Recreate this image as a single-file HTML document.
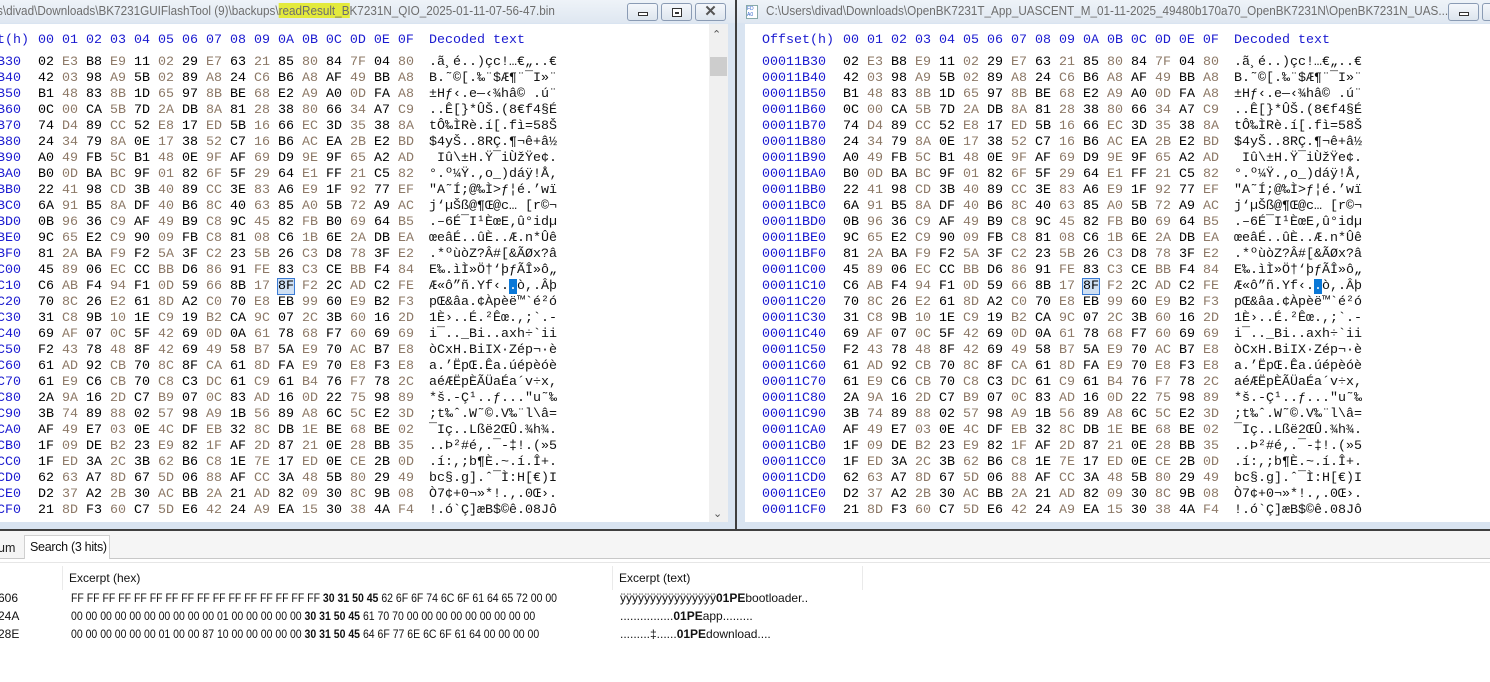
<!DOCTYPE html>
<html><head><meta charset="utf-8">
<style>
*{margin:0;padding:0;box-sizing:border-box}
body{width:1490px;height:682px;overflow:hidden;background:#fff;position:relative;font-family:"Liberation Sans",sans-serif}
.abs{position:absolute}
.frame{position:absolute;top:0;height:530px;background:#d9e4f1;overflow:hidden}
.title{position:absolute;left:0;right:0;top:0;height:23px;background:linear-gradient(#eef3f8,#dfe7f1);color:#6d6d6d;font-size:13px;line-height:22px;white-space:nowrap;overflow:hidden}
.title span.t{transform:scaleX(.9);transform-origin:left center}
.content{position:absolute;top:24px;background:#fff;overflow:hidden}
.mono{font-family:"Liberation Mono",monospace;font-size:13.33px;white-space:pre;line-height:16px}
.btn{position:absolute;top:3px;width:31px;height:18px;border:1px solid #8a9bb4;border-radius:3px;background:linear-gradient(#f4f7fb,#dde5ee)}
.blue{color:#1a1ad0}
.g{color:#8c7866}
.hl{background:#0a78d7;color:#fff}
.bx{outline:1px solid #3a7bd5;background:#cfe0f4}
.tbl{font-size:12px;color:#111;white-space:nowrap;transform-origin:left center}
</style></head><body>

<!-- left panel -->
<div class="frame" style="left:0;width:736px">
  <div class="title"><span class="t" style="position:absolute;left:-3px">s\divad\Downloads\BK7231GUIFlashTool (9)\backups\<span style="background:#e3ea3c">readResult_B</span>K7231N_QIO_2025-01-11-07-56-47.bin</span></div>
  <div class="btn" style="left:627px"><div class="abs" style="left:10px;top:8px;width:10px;height:4px;border:1px solid #333;background:#fff"></div></div>
  <div class="btn" style="left:661px"><div class="abs" style="left:10px;top:4px;width:10px;height:9px;border:1px solid #333;background:#fff"><div class="abs" style="left:2px;top:3px;width:4px;height:2px;background:#333"></div></div></div>
  <div class="btn" style="left:695px;font-size:15px;line-height:15px;text-align:center;color:#555;font-weight:bold">✕</div>
  <div class="content" id="lc" style="left:0;width:728px;height:498px"></div>
  <div class="abs" style="left:709px;top:24px;width:19px;height:498px;background:#f0f0f0"></div>
  <div class="abs" style="left:712px;top:28px;font-size:11px;color:#555">&#8963;</div>
  <div class="abs" style="left:710px;top:57px;width:17px;height:19px;background:#cdcdcd"></div>
  <div class="abs" style="left:713px;top:507px;font-size:11px;color:#555">&#8964;</div>
</div>
<div class="abs" style="left:735px;top:0;width:2px;height:531px;background:#3f3f3f"></div>

<!-- right panel -->
<div class="frame" style="left:737px;width:753px">
  <div class="title"><span style="position:absolute;left:9px;top:5px;width:12px;height:14px;border:1px solid #8aa;background:#fff;font-size:5px;line-height:6px;color:#36c">FD<br>A0</span><span class="t" style="position:absolute;left:29px">C:\Users\divad\Downloads\OpenBK7231T_App_UASCENT_M_01-11-2025_49480b170a70_OpenBK7231N\OpenBK7231N_UAS...</span></div>
  <div class="btn" style="left:711px"><div class="abs" style="left:10px;top:8px;width:10px;height:4px;border:1px solid #333;background:#fff"></div></div>
  <div class="btn" style="left:745px"></div>
  <div class="content" id="rc" style="left:8px;width:745px;height:498px"></div>
</div>
<div class="abs" style="left:0;top:529px;width:1490px;height:2px;background:#3f3f3f"></div>

<!-- bottom -->
<div class="abs" style="left:0;top:531px;width:1490px;height:28px;background:#f5f5f5;border-bottom:1px solid #c8c8c8"></div>
<div class="abs" style="left:-2px;top:541px;font-size:12.5px;color:#222">um</div>
<div class="abs" style="left:24px;top:535px;width:86px;height:24px;background:#fff;border:1px solid #d0d0d0;border-bottom:none;font-size:12.5px;line-height:22px;padding-left:5px;color:#111;white-space:nowrap;letter-spacing:-0.3px">Search (3 hits)</div>
<div class="abs" style="left:0;top:562px;width:1490px;height:1px;background:#e6e6e6"></div>
<div class="abs" style="left:62px;top:566px;width:1px;height:24px;background:#eaeaea"></div>
<div class="abs" style="left:612px;top:566px;width:1px;height:24px;background:#eaeaea"></div>
<div class="abs" style="left:862px;top:566px;width:1px;height:24px;background:#eaeaea"></div>
<div class="abs tbl" style="left:-3px;top:571px">:</div>
<div class="abs tbl" style="left:69px;top:571px">Excerpt (hex)</div>
<div class="abs tbl" style="left:619px;top:571px">Excerpt (text)</div>

<div class="abs tbl" style="left:-2px;top:591px">606</div>
<div class="abs tbl" style="left:-2px;top:609px">24A</div>
<div class="abs tbl" style="left:-2px;top:627px">28E</div>

<div class="abs tbl" style="left:71px;top:591px;transform:scaleX(.875)">FF FF FF FF FF FF FF FF FF FF FF FF FF FF FF FF <b>30 31 50 45</b> 62 6F 6F 74 6C 6F 61 64 65 72 00 00</div>
<div class="abs tbl" style="left:71px;top:609px;transform:scaleX(.875)">00 00 00 00 00 00 00 00 00 00 01 00 00 00 00 00 <b>30 31 50 45</b> 61 70 70 00 00 00 00 00 00 00 00 00</div>
<div class="abs tbl" style="left:71px;top:627px;transform:scaleX(.875)">00 00 00 00 00 00 01 00 00 87 10 00 00 00 00 00 <b>30 31 50 45</b> 64 6F 77 6E 6C 6F 61 64 00 00 00 00</div>
<div class="abs tbl" style="left:620px;top:591px;transform:scaleX(1)">ÿÿÿÿÿÿÿÿÿÿÿÿÿÿÿÿ<b>01PE</b>bootloader..</div>
<div class="abs tbl" style="left:620px;top:609px;transform:scaleX(1)">................<b>01PE</b>app.........</div>
<div class="abs tbl" style="left:620px;top:627px;transform:scaleX(1)">.........‡......<b>01PE</b>download....</div>

<script>
var rows=[
"02 E3 B8 E9 11 02 29 E7 63 21 85 80 84 7F 04 80",
"42 03 98 A9 5B 02 89 A8 24 C6 B6 A8 AF 49 BB A8",
"B1 48 83 8B 1D 65 97 8B BE 68 E2 A9 A0 0D FA A8",
"0C 00 CA 5B 7D 2A DB 8A 81 28 38 80 66 34 A7 C9",
"74 D4 89 CC 52 E8 17 ED 5B 16 66 EC 3D 35 38 8A",
"24 34 79 8A 0E 17 38 52 C7 16 B6 AC EA 2B E2 BD",
"A0 49 FB 5C B1 48 0E 9F AF 69 D9 9E 9F 65 A2 AD",
"B0 0D BA BC 9F 01 82 6F 5F 29 64 E1 FF 21 C5 82",
"22 41 98 CD 3B 40 89 CC 3E 83 A6 E9 1F 92 77 EF",
"6A 91 B5 8A DF 40 B6 8C 40 63 85 A0 5B 72 A9 AC",
"0B 96 36 C9 AF 49 B9 C8 9C 45 82 FB B0 69 64 B5",
"9C 65 E2 C9 90 09 FB C8 81 08 C6 1B 6E 2A DB EA",
"81 2A BA F9 F2 5A 3F C2 23 5B 26 C3 D8 78 3F E2",
"45 89 06 EC CC BB D6 86 91 FE 83 C3 CE BB F4 84",
"C6 AB F4 94 F1 0D 59 66 8B 17 8F F2 2C AD C2 FE",
"70 8C 26 E2 61 8D A2 C0 70 E8 EB 99 60 E9 B2 F3",
"31 C8 9B 10 1E C9 19 B2 CA 9C 07 2C 3B 60 16 2D",
"69 AF 07 0C 5F 42 69 0D 0A 61 78 68 F7 60 69 69",
"F2 43 78 48 8F 42 69 49 58 B7 5A E9 70 AC B7 E8",
"61 AD 92 CB 70 8C 8F CA 61 8D FA E9 70 E8 F3 E8",
"61 E9 C6 CB 70 C8 C3 DC 61 C9 61 B4 76 F7 78 2C",
"2A 9A 16 2D C7 B9 07 0C 83 AD 16 0D 22 75 98 89",
"3B 74 89 88 02 57 98 A9 1B 56 89 A8 6C 5C E2 3D",
"AF 49 E7 03 0E 4C DF EB 32 8C DB 1E BE 68 BE 02",
"1F 09 DE B2 23 E9 82 1F AF 2D 87 21 0E 28 BB 35",
"1F ED 3A 2C 3B 62 B6 C8 1E 7E 17 ED 0E CE 2B 0D",
"62 63 A7 8D 67 5D 06 88 AF CC 3A 48 5B 80 29 49",
"D2 37 A2 2B 30 AC BB 2A 21 AD 82 09 30 8C 9B 08",
"21 8D F3 60 C7 5D E6 42 24 A9 EA 15 30 38 4A F4"];
var dec=new TextDecoder('windows-1252');
function esc(s){return s.replace(/&/g,'&amp;').replace(/</g,'&lt;').replace(/>/g,'&gt;')}
function build(id,x0){
  var h='';
  var hdr='<div class="abs mono blue" style="left:'+x0+'px;top:9px">Offset(h)</div>';
  var cols='';for(var i=0;i<16;i++)cols+=('0'+i.toString(16).toUpperCase()).slice(-2)+' ';
  hdr+='<div class="abs mono blue" style="left:'+(x0+81)+'px;top:9px">'+cols+'</div>';
  hdr+='<div class="abs mono blue" style="left:'+(x0+472)+'px;top:9px">Decoded text</div>';
  h+=hdr;
  for(var r=0;r<rows.length;r++){
    var y=31+r*16;
    var off=(0x11B30+r*16).toString(16).toUpperCase();off=('00000000'+off).slice(-8);
    h+='<div class="abs mono blue" style="left:'+x0+'px;top:'+y+'px">'+off+'</div>';
    var bs=rows[r].split(' '),hx='',tx='';
    for(var i=0;i<16;i++){
      var b=parseInt(bs[i],16),c;
      var cls=(i%2)?'g':'';
      if(r==14&&i==10)cls='bx';
      hx+='<span class="'+cls+'">'+bs[i]+'</span> ';
      if(b<32||b==0x7f||b==0x81||b==0x8d||b==0x8f||b==0x90||b==0x9d||b==0xad)c='.';
      else c=dec.decode(new Uint8Array([b]));
      if(b==0xa0)c='\u00a0';
      tx+=(r==14&&i==10)?'<span class="hl">'+esc(c)+'</span>':esc(c);
    }
    h+='<div class="abs mono" style="left:'+(x0+81)+'px;top:'+y+'px">'+hx+'</div>';
    h+='<div class="abs mono" style="left:'+(x0+472)+'px;top:'+y+'px;color:#111">'+tx+'</div>';
  }
  document.getElementById(id).innerHTML=h;
}
build('lc',-43);
build('rc',17);
</script>
</body></html>
